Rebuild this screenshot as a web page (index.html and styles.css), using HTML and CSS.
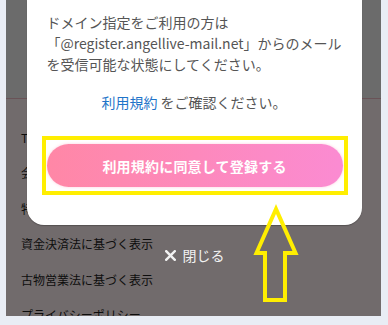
FILE: index.html
```html
<!DOCTYPE html>
<html lang="ja">
<head>
<meta charset="utf-8">
<link rel="stylesheet" href="styles.css">
</head>
<body>
<div class="panel">
  <div class="top-area"></div>
  <ul class="menu">
    <li>Twitter公式アカウント</li>
    <li>会社概要</li>
    <li>特定商取引法に基づく表示</li>
    <li>資金決済法に基づく表示</li>
    <li>古物営業法に基づく表示</li>
    <li>プライバシーポリシー</li>
  </ul>
  <div class="overlay">
    <div class="modal">
      <p class="note">ドメイン指定をご利用の方は<br>「@register.angellive-mail.net」からのメール<br>を受信可能な状態にしてください。</p>
      <p class="terms"><a class="link">利用規約</a> をご確認ください。</p>
      <button class="agree">利用規約に同意して登録する</button>
    </div>
    <div class="close">
      <svg class="x" width="11" height="11" viewBox="0 0 11 11"><path d="M1.2 1.2 L9.8 9.8 M9.8 1.2 L1.2 9.8" stroke="#f2f2f2" stroke-width="2.4" stroke-linecap="square"/></svg>
      <span>閉じる</span>
    </div>
  </div>
</div>
<div class="mark-box"></div>
<svg class="mark-arrow" width="50" height="106" viewBox="250 200 50 106">
  <polygon points="276,209 256.5,253 265,253 265,300 285,300 285,253 295.5,253" fill="none" stroke="#ffee00" stroke-width="4" stroke-linejoin="miter"/>
</svg>
</body>
</html>
```
FILE: styles.css
```css
html, body {
  margin: 0;
  padding: 0;
}
body {
  background: #e9edf5;
  width: 388px;
  height: 325px;
  overflow: hidden;
  position: relative;
  font-family: "Noto Sans CJK JP", "Noto Sans", sans-serif;
}
.panel {
  position: relative;
  width: 375px;
  height: 316px;
  margin-left: 6px;
  background: #fbeef0;
  overflow: hidden;
}
.top-area {
  height: 98px;
  background: #ededed;
  border-bottom: 1px solid #e8b8c0;
}
.menu {
  list-style: none;
  margin: 0;
  padding: 21px 0 0 15px;
}
.menu li {
  font-size: 12px;
  line-height: 35.4px;
  color: #1e1e1e;
  white-space: nowrap;
}
.overlay {
  position: absolute;
  inset: 0;
  background: rgba(0, 0, 0, 0.55);
  display: flex;
  flex-direction: column;
  align-items: center;
}
.modal {
  box-sizing: border-box;
  width: 335px;
  margin-left: 1px;
  background: #fff;
  border-radius: 0 0 17px 17px;
  padding: 12px 20px 38px 20px;
  box-shadow: 0 1px 1px rgba(0, 0, 0, 0.25);
}
.note {
  margin: 0;
  font-size: 14px;
  line-height: 21px;
  color: #555;
  white-space: nowrap;
}
.terms {
  margin: 17px 0 0 0;
  font-size: 14px;
  line-height: 21px;
  color: #555;
  text-align: center;
}
.link {
  color: #1f74c9;
}
.agree {
  display: block;
  width: 296px;
  height: 43px;
  margin: 31px 0 0 0;
  border: none;
  border-radius: 22px;
  background: linear-gradient(90deg, #ff87a6 0%, #fb8bd2 100%);
  box-shadow: 0 0 3px rgba(255, 140, 180, 0.45);
  color: #fff;
  font-family: "Noto Sans CJK JP", sans-serif;
  font-weight: bold;
  font-size: 14px;
  letter-spacing: 0.2px;
  padding: 0;
}
.close {
  margin-top: 20px;
  margin-left: 2px;
  display: flex;
  align-items: center;
  gap: 7px;
  font-size: 14px;
  line-height: 20px;
  color: #f2f2f2;
}
.mark-box {
  position: absolute;
  left: 42px;
  top: 136px;
  width: 298px;
  height: 51px;
  border: 4px solid #ffee00;
}
.mark-arrow {
  position: absolute;
  left: 250px;
  top: 200px;
}
```
